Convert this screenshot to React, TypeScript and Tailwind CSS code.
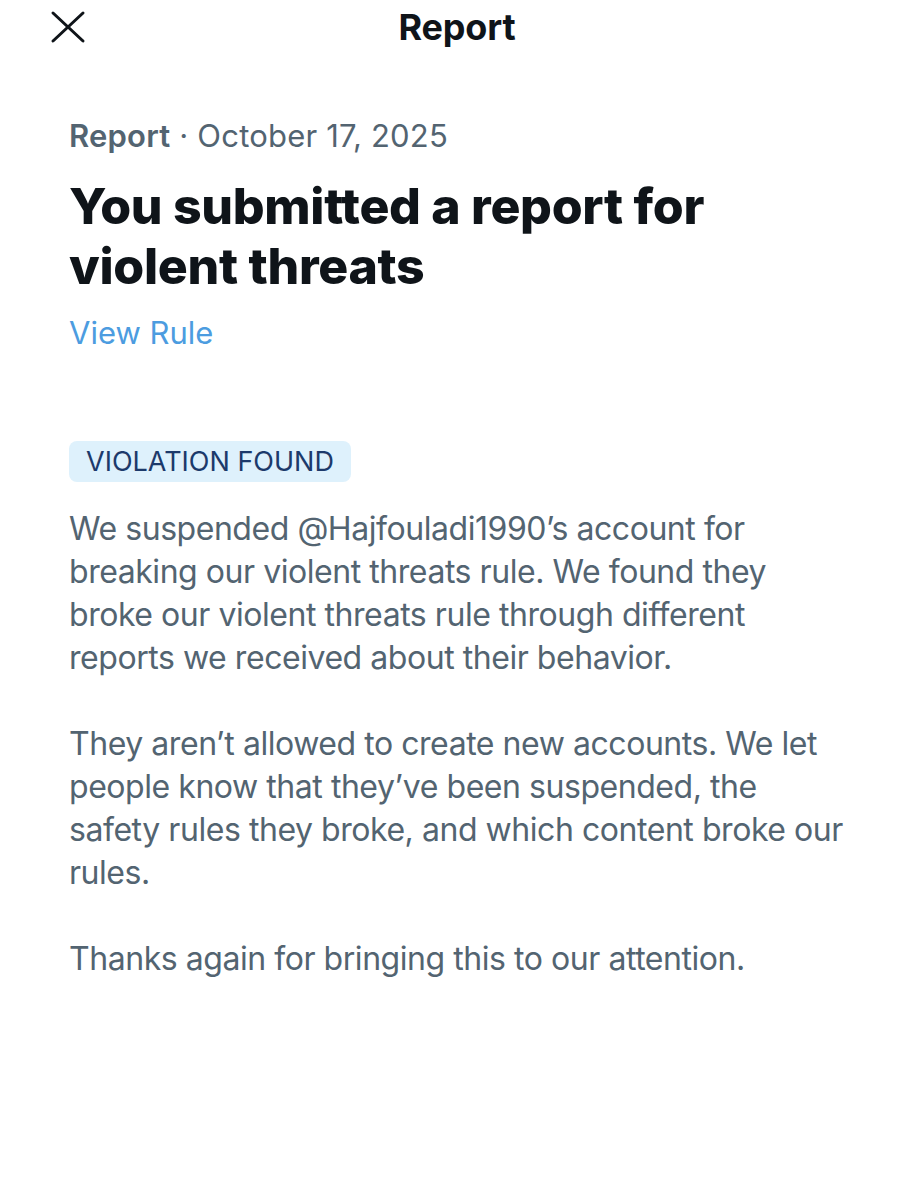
export default function App() {
  return (
    <div className="min-h-[1200px] w-[914px] bg-white text-[#0f1419]" style={{ fontFamily: 'Inter, "Liberation Sans", sans-serif' }}>
      {/* Header */}
      <div className="relative flex h-[54px] items-center justify-center">
        <button className="absolute left-[50px] top-[10px]">
          <svg width="36" height="34" viewBox="0 0 36 34" fill="none" stroke="#0f1419" strokeWidth="3" strokeLinecap="round">
            <path d="M3 3 L33 31" />
            <path d="M33 3 L3 31" />
          </svg>
        </button>
        <h1 className="text-[36px] font-bold leading-[40px] tracking-[-0.2px]">Report</h1>
      </div>

      <div className="px-[69px] pt-[62px]">
        <div className="text-[31px] leading-[40px] tracking-[0.2px] text-[#536471]">
          <span className="font-semibold">Report</span> · October 17, 2025
        </div>
        <h2 className="mt-[20px] whitespace-nowrap text-[50px] font-extrabold leading-[60px] tracking-[-0.3px]">
          You submitted a report for
          <br />
          violent threats
        </h2>
        <a className="mt-[17px] block text-[31px] leading-[40px] text-[#4c9ce0]">View Rule</a>

        <div className="mt-[88px] inline-block rounded-[8px] bg-[#def1fc] px-[17px] py-[4px] text-[27px] leading-[33px] text-[#1c3a6b]">
          VIOLATION FOUND
        </div>

        <div className="mt-[25px] space-y-[43px] whitespace-nowrap text-[32px] leading-[43px] tracking-[-0.45px] text-[#536471]">
          <p>
            We suspended @Hajfouladi1990’s account for
            <br />
            breaking our violent threats rule. We found they
            <br />
            broke our violent threats rule through different
            <br />
            reports we received about their behavior.
          </p>
          <p>
            They aren’t allowed to create new accounts. We let
            <br />
            people know that they’ve been suspended, the
            <br />
            safety rules they broke, and which content broke our
            <br />
            rules.
          </p>
          <p>Thanks again for bringing this to our attention.</p>
        </div>
      </div>
    </div>
  );
}
